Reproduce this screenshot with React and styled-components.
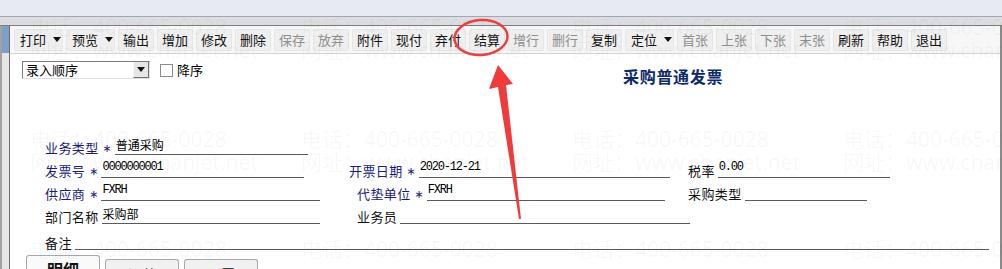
import React from "react";
import styled, { createGlobalStyle } from "styled-components";

const GlobalStyle = createGlobalStyle`
  body {
    margin: 0;
    font-family: "Noto Sans CJK SC", "Noto Sans", sans-serif;
    background: #ffffff;
  }
`;

const Page = styled.div`
  position: relative;
  width: 1002px;
  height: 269px;
  overflow: hidden;
  display: flex;
  flex-direction: column;
  background: #ffffff;
`;

const TopBand = styled.div`
  flex-shrink: 0;
  height: 16px;
  background: #e8eaf1;
  border-bottom: 1px solid #a4a7ae;
`;

const SubBand = styled.div`
  flex-shrink: 0;
  height: 8px;
  background: #dcdde2;
`;

const Body = styled.div`
  flex-shrink: 0;
  height: 300px;
  display: flex;
  border-top: 1px solid #7c7c7c;
`;

const LeftStrip = styled.div`
  flex-shrink: 0;
  width: 7px;
  border-left: 2px solid #a2a2a2;
  background: #e6e6e6;
  display: flex;
  flex-direction: column;
`;

const StripTop = styled.div`
  height: 27px;
  background: #7f9fcb;
`;

const Panel = styled.div`
  flex: 1;
  min-width: 0;
  display: flex;
  flex-direction: column;
  border-left: 1px solid #6c6c6c;
  border-right: 2px solid #8a8a8a;
`;

const Toolbar = styled.div`
  flex-shrink: 0;
  height: 28px;
  display: flex;
  align-items: center;
  gap: 3px;
  padding-left: 4px;
  background: #f7f7f7;
  border-bottom: 1px solid #d4d4d4;
  box-sizing: border-box;
`;

const ToolButton = styled.div`
  flex-shrink: 0;
  height: 22px;
  width: ${(p) => (p.$dd ? 49 : 36)}px;
  box-sizing: border-box;
  display: flex;
  align-items: center;
  justify-content: ${(p) => (p.$dd ? "flex-start" : "center")};
  padding-left: ${(p) => (p.$dd ? 5 : 0)}px;
  gap: 7px;
  background: #efefef;
  border: 1px solid #e6e6e6;
  border-radius: 2px;
  font-size: 13px;
  color: ${(p) => (p.$off ? "#8e8e8e" : "#111111")};
  white-space: nowrap;
`;

const Caret = styled.span`
  width: 0;
  height: 0;
  border-left: 4px solid transparent;
  border-right: 4px solid transparent;
  border-top: 5px solid #111111;
`;

const Sheet = styled.div`
  flex: 1;
  display: flex;
  flex-direction: column;
  background: #ffffff;
`;

const Header = styled.div`
  flex-shrink: 0;
  height: 78px;
  box-sizing: border-box;
  padding: 7px 0 0 12px;
  display: flex;
  align-items: flex-start;
`;

const Combo = styled.div`
  width: 128px;
  height: 18px;
  box-sizing: border-box;
  display: flex;
  border-top: 1px solid #7a7a7a;
  border-left: 1px solid #7a7a7a;
  border-right: 1px solid #e0e0e0;
  border-bottom: 1px solid #e0e0e0;
  background: #ffffff;
`;

const ComboText = styled.div`
  flex: 1;
  font-size: 13px;
  line-height: 16px;
  padding-left: 3px;
  color: #000000;
`;

const ComboButton = styled.div`
  width: 16px;
  display: flex;
  align-items: center;
  justify-content: center;
  background: #e6e6e6;
  border-left: 1px solid #f8f8f8;
  border-right: 1px solid #707070;
  border-bottom: 1px solid #707070;
  box-sizing: border-box;
`;

const Check = styled.div`
  width: 11px;
  height: 11px;
  margin: 3px 4px 0 10px;
  border: 1px solid #8c8c8c;
  background: #ffffff;
`;

const CheckLabel = styled.div`
  font-size: 13px;
  line-height: 17px;
  color: #000000;
`;

const Title = styled.div`
  margin: 3px 0 0 420px;
  font-size: 16px;
  font-weight: 700;
  letter-spacing: 0.7px;
  color: #0d2a6b;
`;

const Form = styled.div`
  flex-shrink: 0;
  display: flex;
  flex-direction: column;
  padding-left: 35px;
`;

const Row = styled.div`
  flex-shrink: 0;
  height: ${(p) => p.$h || 23}px;
  display: flex;
  align-items: flex-end;
`;

const Field = styled.div`
  flex-shrink: 0;
  width: ${(p) => p.$w}px;
  margin-left: ${(p) => p.$ml || 0}px;
  display: flex;
  align-items: flex-end;
`;

const Label = styled.span`
  font-size: 13px;
  line-height: 15px;
  letter-spacing: 0.4px;
  color: ${(p) => (p.$navy ? "#1c1c78" : "#111111")};
  white-space: nowrap;
  margin-right: ${(p) => (p.$star ? 0 : 3)}px;
`;

const Star = styled.span`
  font-family: "DejaVu Sans", sans-serif;
  font-size: 11px;
  line-height: 11px;
  padding-bottom: 1px;
  color: #1c1c78;
  margin: 0 3px 0 4px;
`;

const Value = styled.div`
  flex: 1;
  height: 18px;
  box-sizing: border-box;
  border-bottom: 1px solid #5a5a5a;
  padding: 0 0 3px 1px;
  display: flex;
  align-items: flex-end;
  font-family: ${(p) =>
    p.$mono ? '"Liberation Mono", monospace' : '"Noto Sans CJK SC", sans-serif'};
  font-size: 12px;
  letter-spacing: ${(p) => (p.$mono ? -1.2 : 0)}px;
  line-height: 13px;
  color: #000000;
  white-space: nowrap;
`;

const Tabs = styled.div`
  flex-shrink: 0;
  display: flex;
  align-items: flex-end;
  gap: 5px;
  margin-top: 5px;
  padding-left: 16px;
  height: 30px;
`;

const Tab = styled.div`
  width: 74px;
  height: ${(p) => (p.$active ? 30 : 26)}px;
  box-sizing: border-box;
  border: 1px solid #a8a8a8;
  border-bottom: none;
  border-radius: 3px 3px 0 0;
  background: ${(p) => (p.$active ? "#fafafa" : "#f1f1f1")};
  text-align: center;
  padding-top: ${(p) => (p.$active ? 4 : 5)}px;
  font-size: ${(p) => (p.$active ? 16 : 14)}px;
  font-weight: ${(p) => (p.$active ? 700 : 400)};
  line-height: 18px;
  color: #111111;
`;

const Watermark = styled.div`
  position: absolute;
  inset: 0;
  pointer-events: none;
`;

const Mark = styled.span`
  position: absolute;
  font-family: "Noto Sans", "Noto Sans CJK SC", sans-serif;
  font-size: 21px;
  line-height: 24px;
  color: rgba(0, 0, 0, 0.04);
  white-space: nowrap;
`;

const Annotation = styled.svg`
  position: absolute;
  left: 0;
  top: 0;
  pointer-events: none;
`;

const tools = [
  { t: "打印", dd: true },
  { t: "预览", dd: true },
  { t: "输出" },
  { t: "增加" },
  { t: "修改" },
  { t: "删除" },
  { t: "保存", off: true },
  { t: "放弃", off: true },
  { t: "附件" },
  { t: "现付" },
  { t: "弃付" },
  { t: "结算" },
  { t: "增行", off: true },
  { t: "删行", off: true },
  { t: "复制" },
  { t: "定位", dd: true },
  { t: "首张", off: true },
  { t: "上张", off: true },
  { t: "下张", off: true },
  { t: "末张", off: true },
  { t: "刷新" },
  { t: "帮助" },
  { t: "退出" },
];

const markRows = [
  { y: 15, text: "电话：400-665-0028" },
  { y: 38, text: "网址：www.chanjet.net" },
  { y: 127, text: "电话：400-665-0028" },
  { y: 150, text: "网址：www.chanjet.net" },
  { y: 237, text: "电话：400-665-0028" },
];
const markCols = [30, 301, 572, 843];

const F = ({ label, navy, star, value, mono, w, ml }) => (
  <Field $w={w} $ml={ml}>
    <Label $navy={navy} $star={star}>
      {label}
    </Label>
    {star && <Star>∗</Star>}
    <Value $mono={mono}>{value}</Value>
  </Field>
);

const App = () => {
  return (
    <>
      <GlobalStyle />
      <Page>
        <TopBand />
        <SubBand />
        <Body>
          <LeftStrip>
            <StripTop />
          </LeftStrip>
          <Panel>
            <Toolbar>
              {tools.map((b) => (
                <ToolButton key={b.t} $dd={b.dd} $off={b.off}>
                  {b.t}
                  {b.dd && <Caret />}
                </ToolButton>
              ))}
            </Toolbar>
            <Sheet>
              <Header>
                <Combo>
                  <ComboText>录入顺序</ComboText>
                  <ComboButton>
                    <Caret />
                  </ComboButton>
                </Combo>
                <Check />
                <CheckLabel>降序</CheckLabel>
                <Title>采购普通发票</Title>
              </Header>
              <Form>
                <Row>
                  <F label="业务类型" navy star value="普通采购" w={263} />
                </Row>
                <Row>
                  <F label="发票号" navy star value="0000000001" mono w={259} />
                  <F label="开票日期" navy star value="2020-12-21" mono w={321} ml={45} />
                  <F label="税率" value="0.00" mono w={202} ml={18} />
                </Row>
                <Row>
                  <F label="供应商" navy star value="FXRH" mono w={275} />
                  <F label="代垫单位" navy star value="FXRH" mono w={308} ml={37} />
                  <F label="采购类型" value="" w={179} ml={23} />
                </Row>
                <Row>
                  <F label="部门名称" value="采购部" w={275} />
                  <F label="业务员" value="" w={333} ml={37} />
                </Row>
                <Row $h={26}>
                  <F label="备注" value="" w={944} />
                </Row>
              </Form>
              <Tabs>
                <Tab $active>明细</Tab>
                <Tab>汇总</Tab>
                <Tab>设置</Tab>
              </Tabs>
            </Sheet>
          </Panel>
        </Body>
        <Watermark>
          {markRows.map((r) =>
            markCols.map((x) => (
              <Mark key={`${r.y}-${x}`} style={{ top: r.y, left: x }}>
                {r.text}
              </Mark>
            ))
          )}
        </Watermark>
        <Annotation width="1002" height="269" viewBox="0 0 1002 269">
          <ellipse
            cx="481"
            cy="37.5"
            rx="26.5"
            ry="17.5"
            fill="none"
            stroke="#e8413f"
            strokeWidth="2.5"
            transform="rotate(-4 481 37.5)"
          />
          <polygon
            points="498,65 513,84 506,85 521,219 519,219 498,87 489,89"
            fill="#ef3b3b"
          />
        </Annotation>
      </Page>
    </>
  );
};

export default App;
